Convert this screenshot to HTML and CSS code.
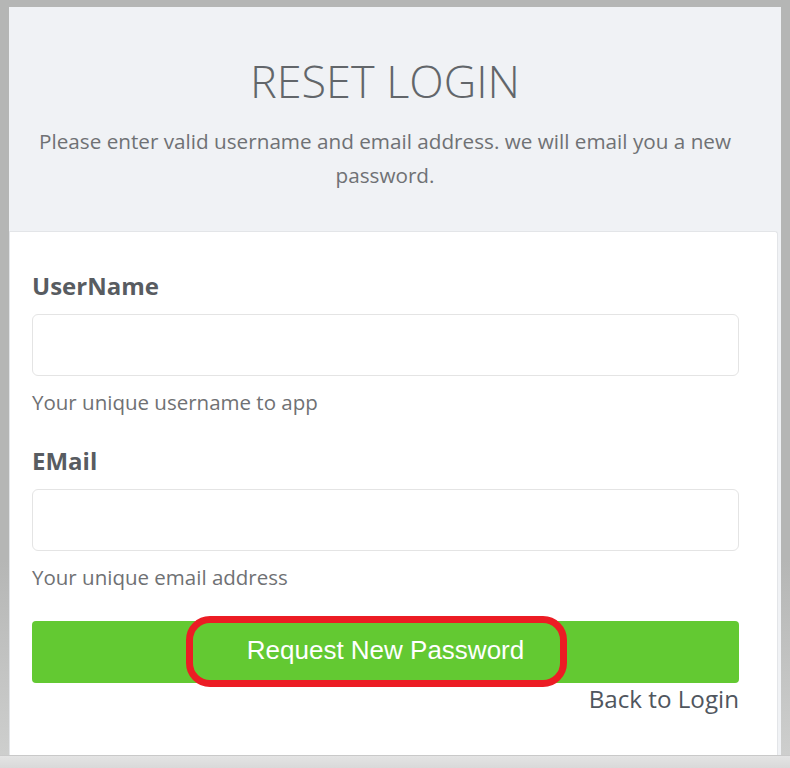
FILE: index.html
```html
<!DOCTYPE html>
<html lang="en">
<head>
  <meta charset="UTF-8" />
  <meta name="viewport" content="width=device-width, initial-scale=1.0"/>
  <title>Reset Login</title>
  <link rel="stylesheet" href="styles.css">
</head>
<body>
  <div class="frame">
    <div class="header">
      <h1>RESET LOGIN</h1>
      <p>Please enter valid username and email address. we will email you a new password.</p>
    </div>

    <form class="card" onsubmit="event.preventDefault()">
      <div class="input-group">
        <label for="username">UserName</label>
        <input type="text" id="username" name="username">
        <div class="hint">Your unique username to app</div>
      </div>

      <div class="input-group">
        <label for="email">EMail</label>
        <input type="email" id="email" name="email">
        <div class="hint">Your unique email address</div>
      </div>

      <div class="btn-wrap">
        <button class="btn" type="submit">Request New Password</button>
        <span class="highlight"></span>
      </div>

      <div class="back">
        <a href="#">Back to Login</a>
      </div>
    </form>
  </div>
  <div class="bottom-strip"></div>
</body>
</html>
```

FILE: styles.css
```css
html, body {
  height: 100%;
}

body {
  margin: 0;
  background: linear-gradient(#b5b6b5 0, #b5b6b5 560px, #cfd0cf 768px);
  font-family: "Open Sans", "Liberation Sans", sans-serif;
  display: flex;
  flex-direction: column;
  overflow: hidden;
}

.frame {
  margin: 7px 9px 0 9px;
  height: 748px;
  background: #f0f2f5;
  display: flex;
  flex-direction: column;
}

.header {
  height: 224px;
  box-sizing: border-box;
  padding: 47px 40px 0 20px;
  text-align: center;
}

.header h1 {
  margin: 0;
  font-size: 45px;
  line-height: 54px;
  font-weight: 300;
  color: #62666a;
}

.header p {
  margin: 16px 0 0 0;
  font-size: 20.7px;
  line-height: 34px;
  color: #6f7174;
}

.card {
  flex: 1;
  margin: 0 3px 0 0;
  background: white;
  border: 1px solid #e3e5e8;
  border-bottom: none;
  border-radius: 0 3px 0 0;
  padding: 38px 38px 0 22px;
}

.input-group {
  margin-bottom: 29px;
}

.input-group label {
  display: block;
  font-size: 24px;
  line-height: 32px;
  font-weight: 700;
  color: #585c61;
  margin-bottom: 12px;
}

.input-group input {
  display: block;
  width: 100%;
  height: 62px;
  box-sizing: border-box;
  border: 1px solid #e4e4e4;
  border-radius: 6px;
  padding: 0 14px;
  font-family: inherit;
  font-size: 20px;
  background: white;
}

.hint {
  margin-top: 12px;
  font-size: 20.5px;
  line-height: 28px;
  color: #6f7174;
}

.btn-wrap {
  position: relative;
  margin-top: 30px;
}

.btn {
  display: block;
  width: 100%;
  height: 62px;
  border: none;
  border-radius: 4px;
  background-color: #63c932;
  color: white;
  font-family: "Liberation Sans", Arial, sans-serif;
  font-size: 26px;
  padding: 0 0 4px 0;
  cursor: pointer;
}

/* red annotation ring drawn over the button */
.highlight {
  position: absolute;
  left: 154px;
  top: -5px;
  width: 381px;
  height: 71px;
  box-sizing: border-box;
  border: 7px solid #ec1c24;
  border-radius: 24px;
  pointer-events: none;
}

.back {
  text-align: right;
  margin-top: 0;
}

.back a {
  font-size: 24.2px;
  line-height: 31px;
  color: #50565e;
  text-decoration: none;
}

.bottom-strip {
  flex: 1;
  margin-top: 0;
  border-top: 1px solid #c9c9c9;
  background: linear-gradient(#e4e4e4, #d9d9d9);
}
```
